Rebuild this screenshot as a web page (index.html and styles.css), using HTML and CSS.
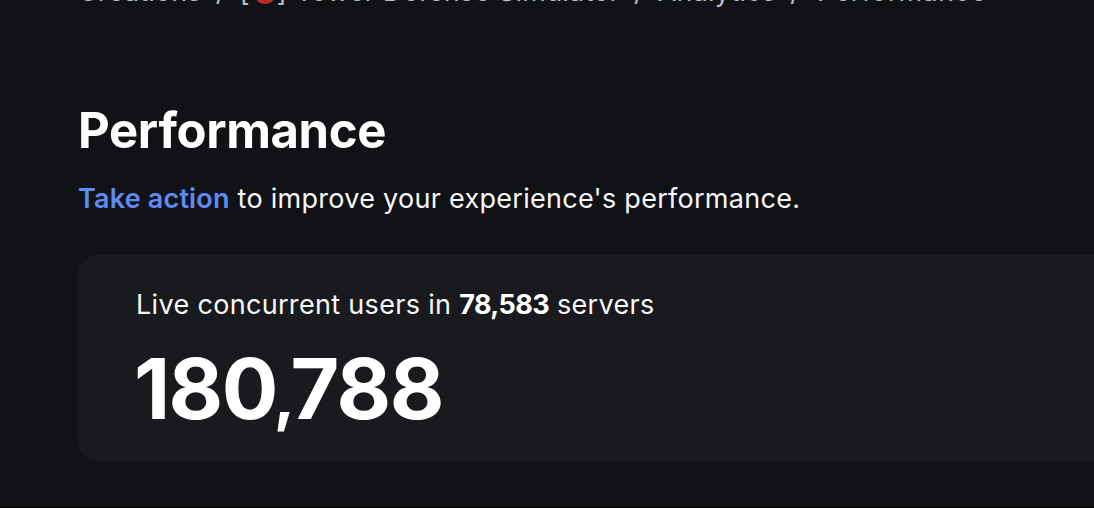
FILE: index.html
```html
<!DOCTYPE html>
<html lang="en">
<head>
    <meta charset="utf-8">
    <title>Performance</title>
    <link rel="stylesheet" href="styles.css">
</head>
<body>

<nav class="breadcrumbs">
    <span class="crumb">Creations</span>
    <span class="separator">/</span>
    <span class="crumb">[<svg class="dot" viewBox="0 0 22 22"><circle cx="11" cy="11" r="11"/></svg>] <span class="name">Tower Defense Simulator</span></span>
    <span class="separator">/</span>
    <span class="crumb">Analytics</span>
    <span class="separator">/</span>
    <span class="crumb current">Performance</span>
</nav>

<main>
    <h1>Performance</h1>
    <p class="intro"><a class="action">Take action</a> to improve your experience's performance.</p>

    <section class="card">
        <p class="label">Live concurrent users in <strong>78,583</strong> servers</p>
        <div class="total">180<span class="comma">,</span>788</div>
    </section>
</main>

</body>
</html>
```

FILE: styles.css
```css
body, html {
    margin: 0;
    padding: 0;
    height: 508px;
    overflow: hidden;
}

body {
    box-sizing: border-box;
    border-bottom: 1px solid #0b0203;
    background-color: #111216;
    color: #f7f7f8;
    font-family: Inter, "Open Sans", sans-serif;
    font-size: 27px;
}

.breadcrumbs {
    display: flex;
    height: 32px;
    margin-top: -24px;
    padding-left: 78px;
    line-height: 32px;
    letter-spacing: 0.15px;
    color: #bcbec3;
    white-space: nowrap;
    gap: 14px;
}

.name {
    margin-left: 1px;
    letter-spacing: 0.2px;
}

.current {
    margin-left: 3px;
    letter-spacing: 0.35px;
}

.dot {
    width: 22px;
    height: 22px;
    margin: 0 1px 0 4px;
    vertical-align: -3px;
    fill: #b3302a;
}

main {
    padding: 96px 0 0 78px;
}

h1 {
    margin: 0;
    font-size: 49px;
    line-height: 54px;
    font-weight: 700;
    letter-spacing: -0.35px;
    color: #fff;
    white-space: nowrap;
}

p {
    margin: 0;
    white-space: nowrap;
}

.intro {
    margin-top: 24px;
    line-height: 34px;
    letter-spacing: 0.28px;
}

.action {
    color: #5d8af3;
    font-weight: 600;
    letter-spacing: 0.18px;
}

.card {
    box-sizing: border-box;
    height: 206px;
    margin-top: 39px;
    padding: 33px 0 0 58px;
    border-radius: 20px 0 0 20px;
    background-color: #191a1e;
}

.label {
    line-height: 34px;
    letter-spacing: 0.32px;
}

strong {
    color: #fff;
    font-weight: 700;
    letter-spacing: -0.6px;
}

.total {
    margin: 17px 0 0 -2px;
    font-size: 84px;
    line-height: 100px;
    font-weight: 700;
    letter-spacing: -1.6px;
    color: #fff;
}

.comma {
    margin: 0 -3px 0 -3px;
    font-size: 64px;
    line-height: 1;
}
```
